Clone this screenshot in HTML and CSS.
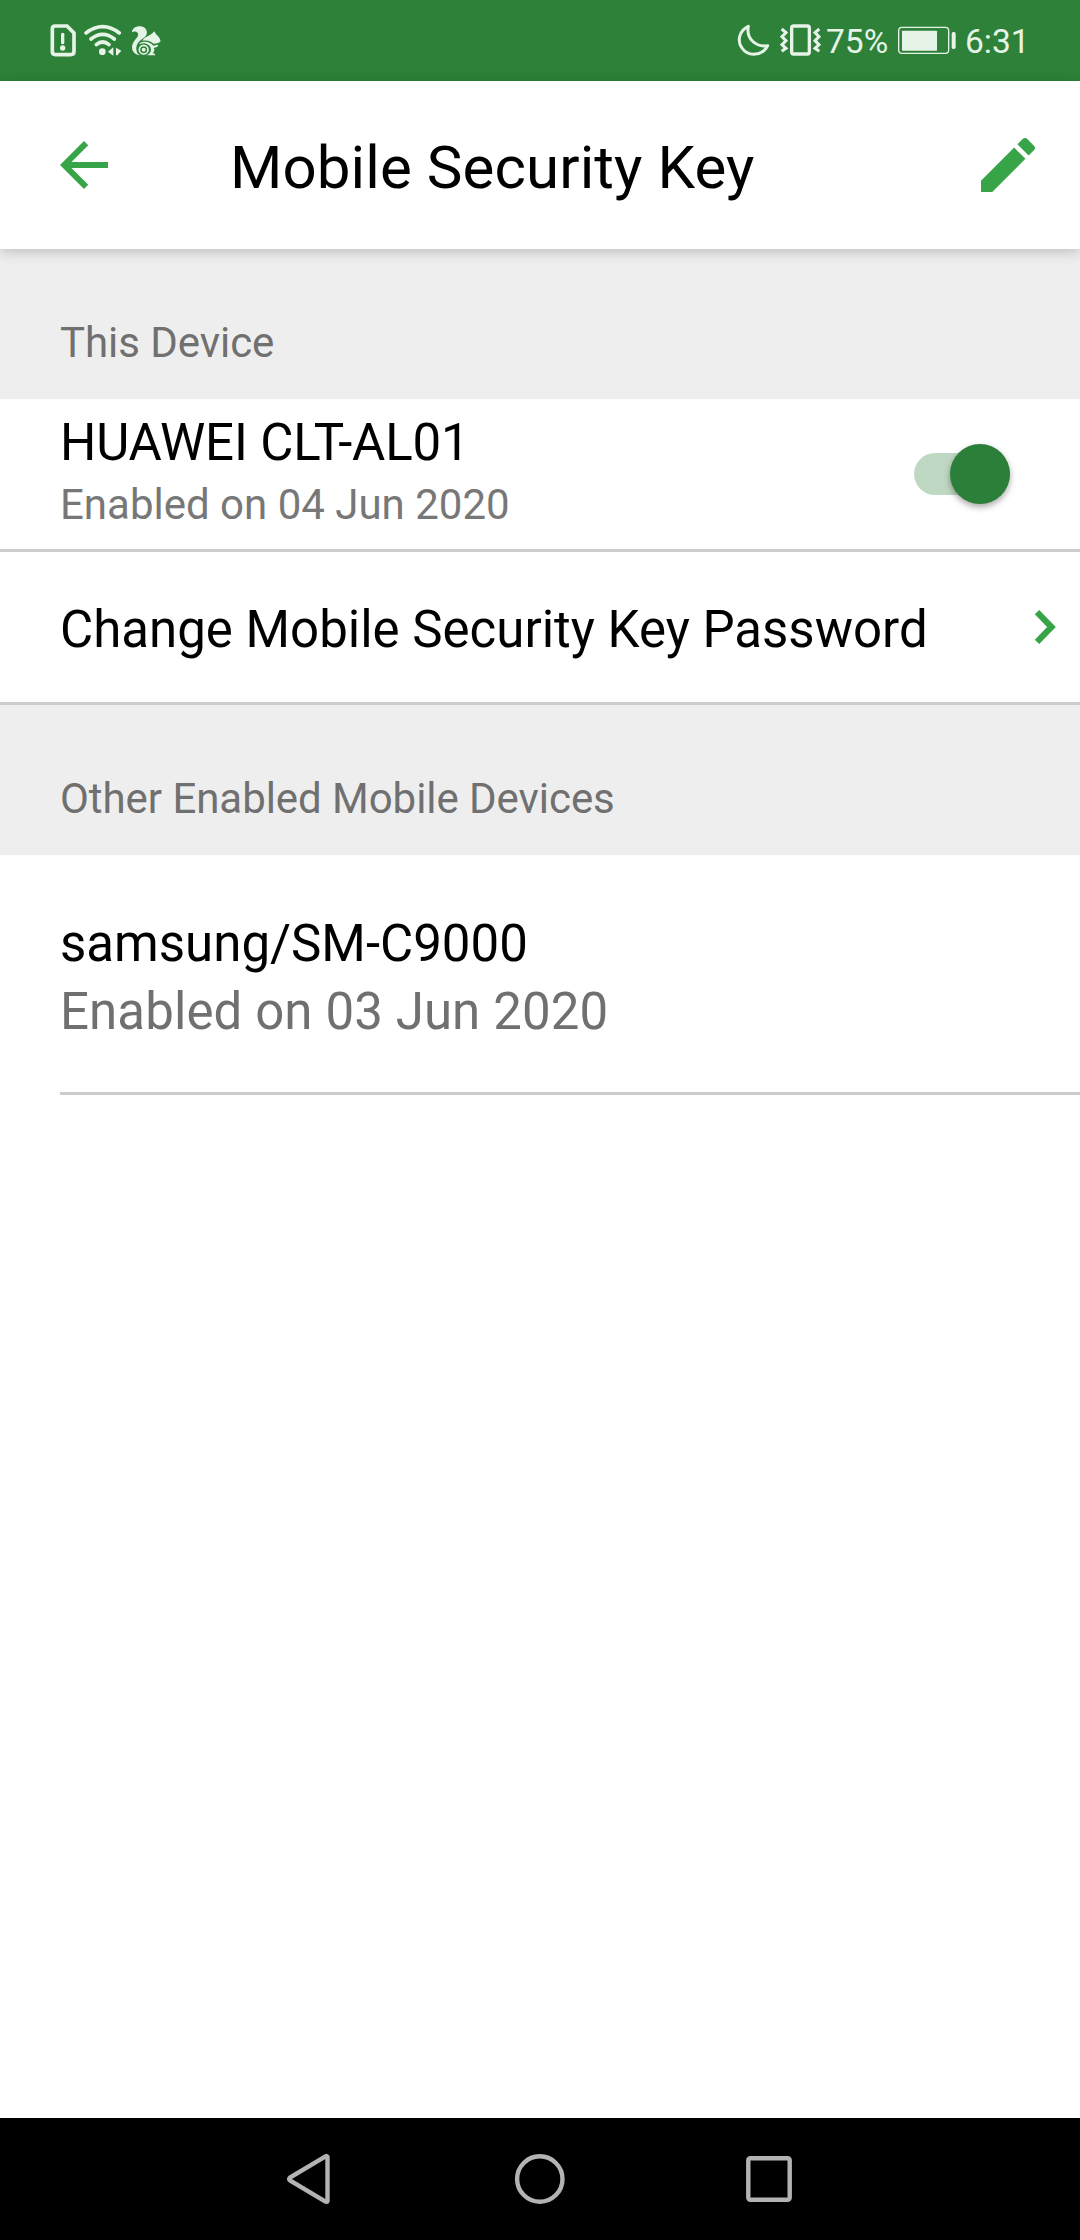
FILE: index.html
```html
<!DOCTYPE html>
<html lang="en">
<head>
<meta charset="utf-8">
<title>Mobile Security Key</title>
<link rel="stylesheet" href="styles.css">
</head>
<body>
<div class="screen">
  <div class="status">
    <svg width="26" height="81" viewBox="60 0 78 243" fill="none" stroke="currentColor">
      <path d="M75 78H111L132 99V154Q132 164 122 164H76Q67 164 67 154V86Q67 78 75 78Z" stroke-width="11"/>
      <path d="M98 103V128" stroke-width="10" stroke-linecap="round"/>
      <circle cx="98" cy="144" r="8" fill="currentColor" stroke="none"/>
    </svg>
    <svg class="wifi" width="38" height="81" viewBox="162 0 114 243" fill="none" stroke="currentColor" stroke-linecap="round">
      <path d="M168 99Q218 61 268 99M183 117Q218 89 253 117M199 134Q218 118 237 134" stroke-width="11"/>
      <g fill="currentColor" stroke="none">
        <circle cx="217" cy="155" r="10"/>
        <path d="M250 142V167L234 155ZM258 143L274 152L262 166H258Z"/>
      </g>
    </svg>
    <svg class="squirrel" width="30" height="81" viewBox="303 0 90 243" fill="currentColor">
      <path d="M306 97C307 84 319 78 331 79C345 80 353 91 350 103C347 112 338 116 329 123C321 130 317 142 320 153C321 159 325 163 330 166C314 164 306 154 306 141C307 125 321 115 324 107C327 98 317 91 306 97Z"/>
      <path d="M337 122C344 109 358 109 368 99L373 94L378 103C386 108 390 116 392 124C386 130 379 131 371 131C366 126 354 119 337 122Z"/>
      <path d="M329 129C346 121 360 127 370 137L384 134C385 141 377 142 371 144C375 149 373 154 368 160C373 160 376 162 376 166H350C365 160 367 143 356 135C347 128 337 128 329 133Z"/>
      <circle cx="341" cy="149" r="13" fill="none" stroke="currentColor" stroke-width="5"/>
      <circle cx="341" cy="149" r="6"/>
    </svg>
    <svg class="moon" width="33" height="81" viewBox="51 0 99 243" fill="none" stroke="currentColor" stroke-width="9" stroke-linejoin="round">
      <path d="M85 79C58 91 50 123 66 144C84 171 128 168 143 137C107 143 78 115 85 79Z"/>
    </svg>
    <svg class="vibrate" width="41" height="81" viewBox="180 0 123 243" fill="none" stroke="currentColor">
      <rect x="215" y="78" width="53" height="84" rx="6" stroke-width="10"/>
      <path d="M185 87L198 98L186 110L198 122L186 134L198 145L185 154M298 87L285 98L297 110L285 122L297 134L285 145L298 154" stroke-width="9"/>
    </svg>
    <span class="percent">75%</span>
    <svg class="battery" width="58" height="81" viewBox="54 0 174 243" fill="currentColor">
      <rect x="56" y="82" width="150" height="78" rx="10" fill="none" stroke="currentColor" stroke-width="4"/>
      <rect x="66" y="92" width="105" height="60" rx="2"/>
      <rect x="215" y="96" width="12" height="51" rx="5"/>
    </svg>
    <span class="clock">6:31</span>
  </div>

  <header class="bar">
    <svg class="icon" viewBox="0 0 24 24"><path d="M20 11H7.83l5.59-5.59L12 4l-8 8 8 8 1.41-1.41L7.83 13H20v-2z"/></svg>
    <h1 class="bar-title">Mobile Security Key</h1>
    <svg class="icon" viewBox="0 0 24 24"><path d="M3 17.25V21h3.75L17.81 9.94l-3.75-3.75L3 17.25zM20.71 7.04c.39-.39.39-1.02 0-1.41l-2.34-2.34c-.39-.39-1.02-.39-1.41 0l-1.83 1.83 3.75 3.75 1.83-1.83z"/></svg>
  </header>

  <main class="content">
    <h2 class="section">This Device</h2>
    <div class="row device">
      <div>
        <div class="name">HUAWEI CLT-AL01</div>
        <div class="date">Enabled on 04 Jun 2020</div>
      </div>
      <div class="switch"><div class="thumb"></div></div>
    </div>
    <div class="row link">
      <div class="name">Change Mobile Security Key Password</div>
      <svg class="chevron" width="21" height="34" viewBox="0 0 21 34"><path d="M2 2.2L16.5 17L2 31.8" fill="none" stroke="currentColor" stroke-width="6.2"/></svg>
    </div>
    <h2 class="section">Other Enabled Mobile Devices</h2>
    <div class="other">
      <div class="name">samsung/SM-C9000</div>
      <div class="date">Enabled on 03 Jun 2020</div>
    </div>
  </main>

  <nav class="nav">
    <svg width="44" height="50" viewBox="0 0 44 50"><path d="M40.5 2.8V47.2Q40 48.5 38.5 47.5L3 26.5Q1.5 25 3 23.5L38.5 2.5Q40 1.5 40.5 2.8Z"/></svg>
    <svg width="50" height="50" viewBox="0 0 50 50"><circle cx="25.8" cy="25" r="22.7"/></svg>
    <svg width="46" height="46" viewBox="0 0 46 46"><rect x="2.3" y="2.3" width="41.4" height="41.4" rx="2"/></svg>
  </nav>
</div>
</body>
</html>
```
FILE: styles.css
```css
* { box-sizing: border-box; }

body {
  margin: 0;
  background: #fff;
  font-family: Roboto, "Liberation Sans", sans-serif;
  color: #000;
}

h1, h2 { margin: 0; font-weight: 400; }
svg { display: block; flex: none; overflow: visible; }

.screen {
  display: flex;
  flex-direction: column;
  width: 1080px;
  height: 2240px;
}

.status {
  display: flex;
  height: 81px;
  padding-left: 50px;
  background: #2d8138;
  color: #e6f4e8;
  font-size: 33.5px;
  line-height: 83px;
  white-space: nowrap;
}
.wifi { margin-left: 8px; }
.squirrel { margin-left: 9px; }
.moon { margin-left: 576px; }
.vibrate { margin-left: 10px; }
.percent { width: 72px; margin-left: 5px; }
.clock { margin-left: 9px; }

.bar {
  position: relative;
  display: flex;
  align-items: center;
  height: 168px;
  padding: 0 36px 0 48px;
  background: #fff;
  box-shadow: 0 3px 12px rgba(0, 0, 0, .2);
}
.icon { width: 72px; height: 72px; fill: #37a447; }
.bar-title {
  flex: 1;
  padding: 5px 0 0 110px;
  font-size: 60px;
  line-height: 70px;
  letter-spacing: .1px;
}

.content { flex: 1; }
.section {
  height: 150px;
  padding: 69px 60px 0;
  background: #eee;
  color: #707070;
  font-size: 42px;
  line-height: 50px;
  letter-spacing: -.05px;
}
.name { font-size: 51px; line-height: 60px; }
.date { color: #777; font-size: 42px; line-height: 64px; }

.row {
  display: flex;
  justify-content: space-between;
  height: 153px;
  padding-left: 60px;
  border-bottom: 3px solid #ccc;
}
.device { padding-top: 14px; padding-right: 70px; }
.device .name { letter-spacing: -.15px; }
.switch {
  position: relative;
  width: 96px;
  height: 42px;
  margin-top: 40px;
  border-radius: 21px;
  background: #bfd8c3;
}
.thumb {
  position: absolute;
  top: -9px;
  right: 0;
  width: 60px;
  height: 60px;
  border-radius: 50%;
  background: #2b7f38;
  box-shadow: 0 3px 6px rgba(0, 0, 0, .35);
}
.link { align-items: center; padding-right: 24px; }
.link .name { padding-top: 5px; }
.chevron { color: #37a447; }

.other {
  height: 240px;
  margin-left: 60px;
  padding-top: 55px;
  border-bottom: 3px solid #ccc;
}
.other .name { line-height: 68px; }
.other .date {
  color: #707070;
  font-size: 51px;
  line-height: 68px;
  letter-spacing: .1px;
}

.nav {
  display: flex;
  align-items: center;
  justify-content: space-between;
  height: 122px;
  padding: 0 288px 0 287px;
  background: #000;
}
.nav svg { fill: none; stroke: #b3b3b3; stroke-width: 4.4; }
```
